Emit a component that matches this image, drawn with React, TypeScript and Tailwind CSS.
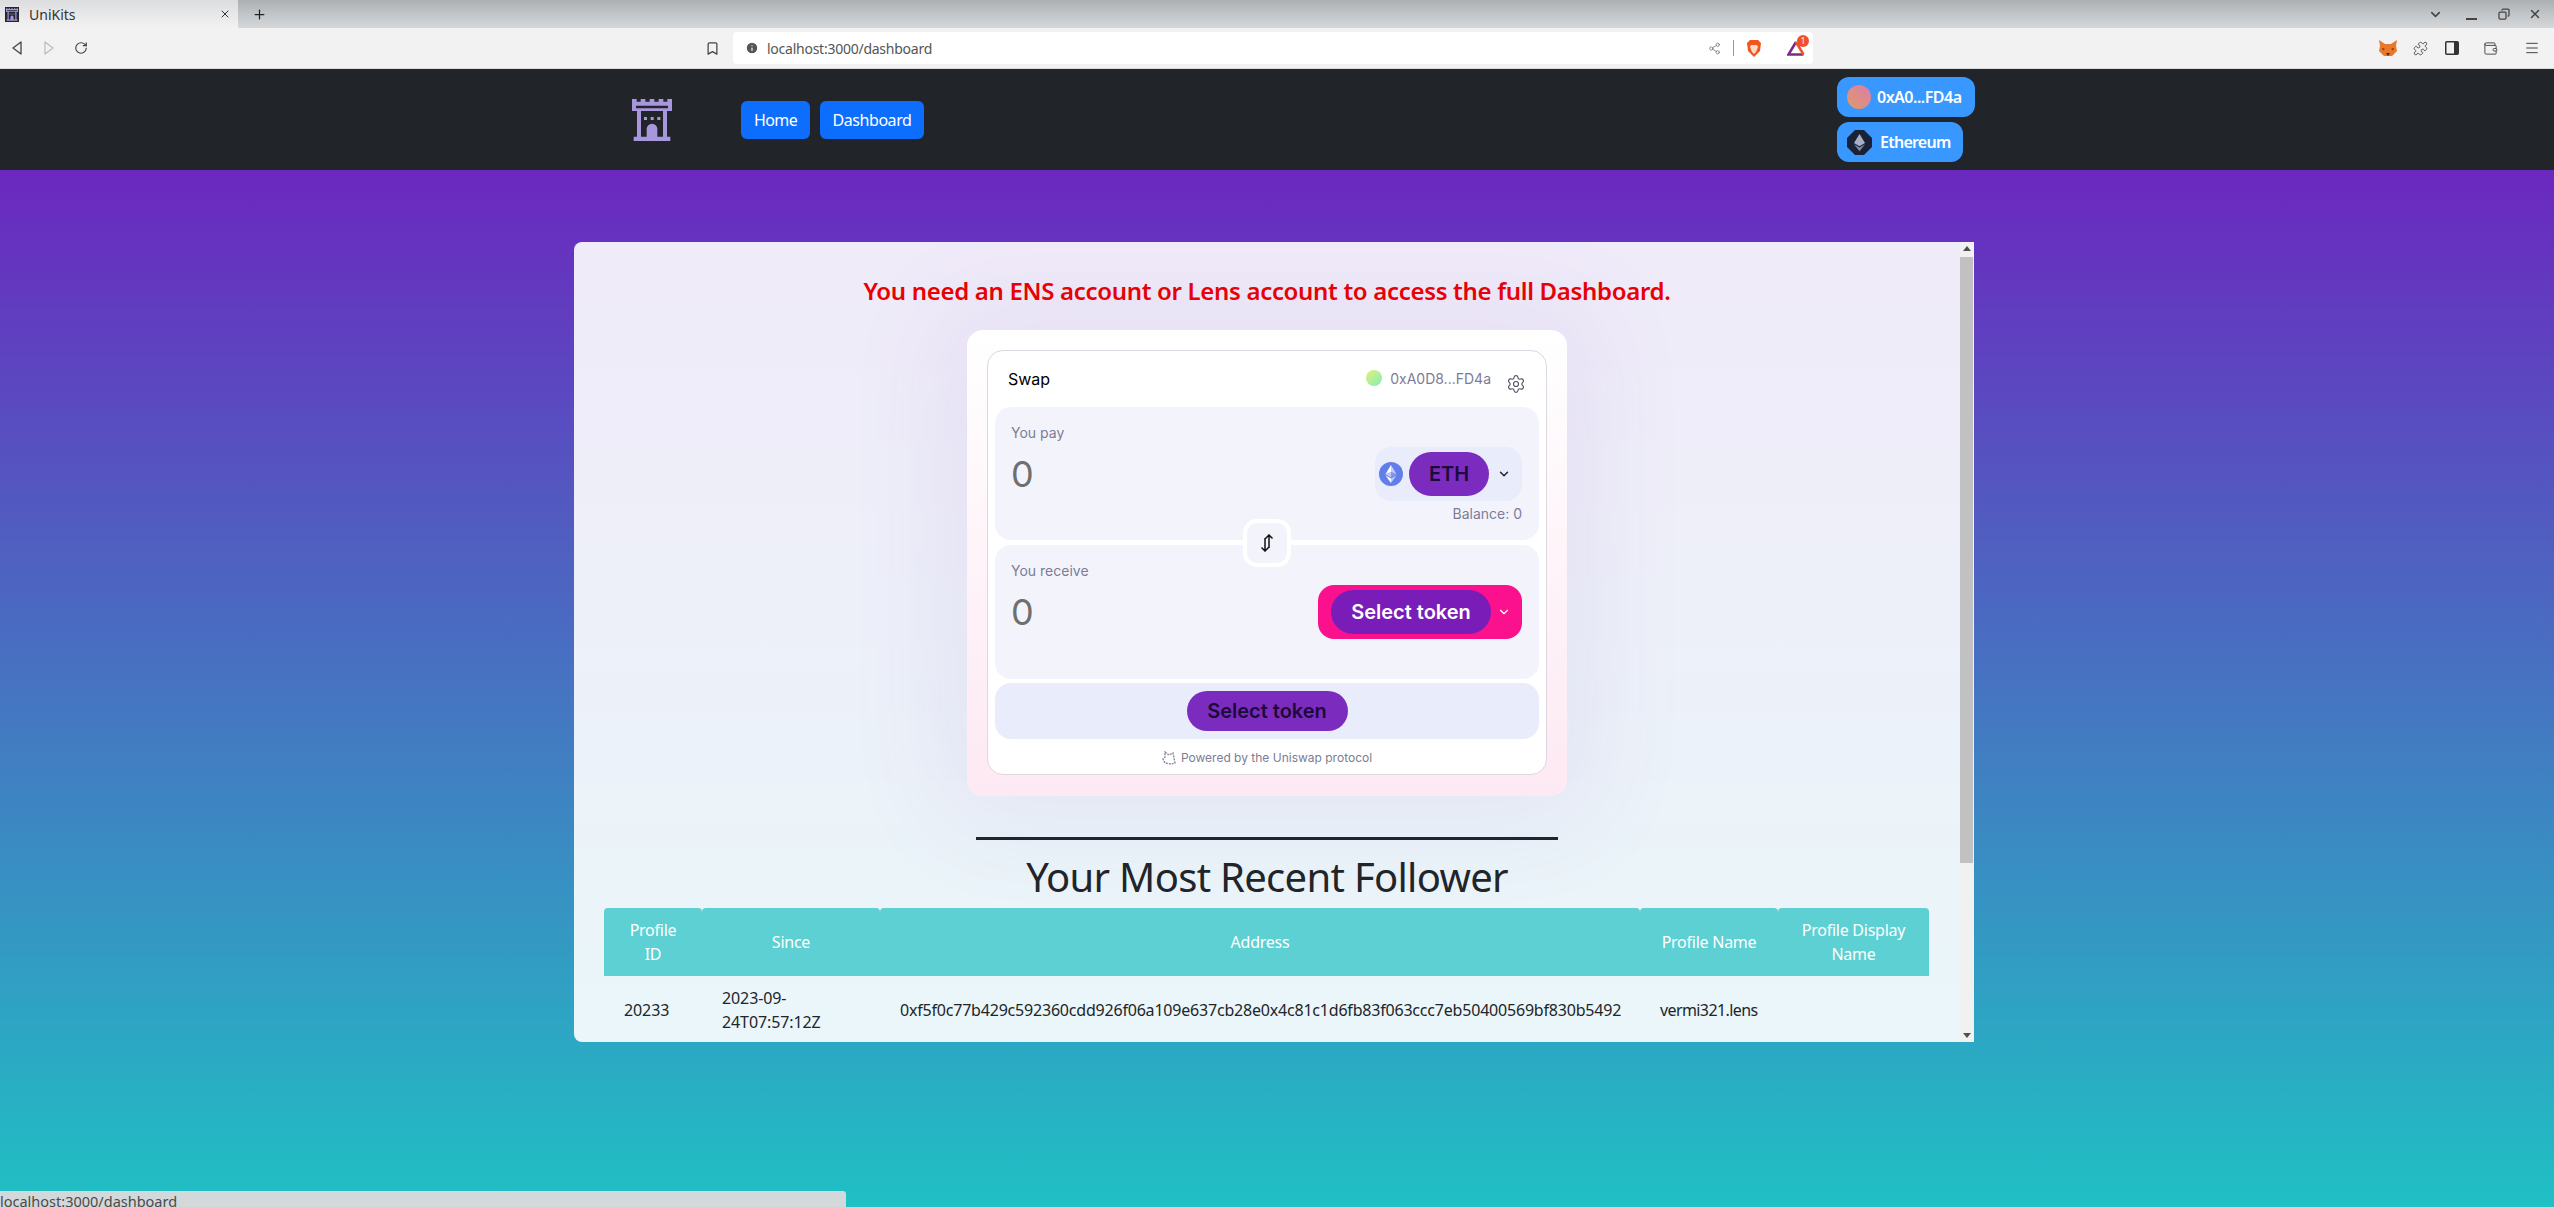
import React from "react";
import { ChevronDown, Settings, Share2, Bookmark, RotateCw, Puzzle, Wallet, Menu, Copy, X, Plus, Info } from "lucide-react";

const uiFont = "font-['Noto_Sans',sans-serif]";

const Castle = ({ className }: { className?: string }) => (
  <svg viewBox="0 0 120 126" className={className} fill="#a897dc">
    <path d="M0 0h14v8h12V0h14v8h13V0h14v8h13V0h14v8h12V0h14v36H105v77h10v13H5v-13h10V36H0z M12 20v8h96v-8z M27 36v77h17V90a16 16 0 0 1 32 0v23h17V36z" fillRule="evenodd" />
    <path d="M36 54h9v9h-9z M56 54h9v9h-9z M76 54h9v9h-9z" />
    <path d="M53 113V92a7 7 0 0 1 14 0v21z" />
  </svg>
);

const EthLogo = () => (
  <svg viewBox="0 0 24 24" className="w-6 h-6 shrink-0">
    <circle cx="12" cy="12" r="12" fill="#627eea" />
    <path d="M12 3v6.7l5.6 2.5z" fill="#fff" fillOpacity="0.6" />
    <path d="M12 3 6.4 12.2 12 9.7z" fill="#fff" />
    <path d="M12 16.5v4.5l5.6-7.8z" fill="#fff" fillOpacity="0.6" />
    <path d="M12 16.5v4.5l-5.6-7.8z" fill="#fff" />
    <path d="m12 15.5 5.6-3.3L12 9.7z" fill="#fff" fillOpacity="0.2" />
    <path d="m6.4 12.2 5.6 3.3V9.7z" fill="#fff" fillOpacity="0.6" />
  </svg>
);

export default function App() {
  return (
    <div className={`relative w-[2554px] h-[1207px] overflow-hidden flex flex-col ${uiFont}`}>
      {/* Browser tabs */}
      <div className="h-[28px] shrink-0 flex items-stretch bg-linear-to-b/srgb from-[#adb0b3] to-[#d6d9db]">
        <div className="w-[238px] flex items-center pl-[5px] pr-[7px] gap-[10px] bg-linear-to-b/srgb from-[#dcdddf] to-[#f2f2f2] text-[14px] text-[#333]">
          <Castle className="w-[14px] h-[15px] bg-[#23262c] p-[1px]" />
          <span className="flex-1">UniKits</span>
          <X size={12} />
        </div>
        <div className="flex items-center pl-[14px] text-[#222]">
          <Plus size={15} />
        </div>
        <div className="flex-1" />
        <div className="flex items-center pr-[3px] text-[#444]">
          <div className="w-[36px] flex justify-center"><ChevronDown size={15} strokeWidth={2.5} /></div>
          <div className="w-[36px] flex justify-center pt-[10px]"><div className="w-[11px] h-[2px] bg-[#444]" /></div>
          <div className="w-[30px] flex justify-center"><Copy size={12} strokeWidth={2.5} className="-scale-x-100" /></div>
          <div className="w-[32px] flex justify-center"><X size={14} strokeWidth={2.5} /></div>
        </div>
      </div>

      {/* Browser toolbar */}
      <div className="h-[40px] shrink-0 flex items-center bg-[#f2f2f2] text-[#444]">
        <div className="w-[700px] flex items-center gap-[18px] pl-[10px]">
          <svg viewBox="0 0 14 16" className="w-[14px] h-[16px]" fill="none" stroke="#444" strokeWidth="1.3" strokeLinejoin="round">
            <path d="M11 2v12L3 8z" />
          </svg>
          <svg viewBox="0 0 14 16" className="w-[14px] h-[16px]" fill="none" stroke="#bdbdbd" strokeWidth="1.3" strokeLinejoin="round">
            <path d="M3 2v12l8-6z" />
          </svg>
          <RotateCw size={14} />
        </div>
        <div className="w-[33px] pl-[5px]">
          <Bookmark size={15} />
        </div>
        <div className="w-[1080px] h-[32px] flex items-center bg-white rounded-[4px] pl-[12px] pr-[8px] gap-[8px]">
          <Info size={14} fill="#555" stroke="#fff" />
          <span className="flex-1 text-[14px] tracking-[-0.25px] text-[#555]">localhost:3000/dashboard</span>
          <Share2 size={13} strokeWidth={1.5} className="text-[#777]" />
          <div className="w-px h-[16px] bg-[#999] ml-[4px] mr-[5px]" />
          <svg viewBox="0 0 14 17" className="w-[14px] h-[17px]">
            <path d="M3 0h8l3 3-1 8-6 6-6-6-1-8z" fill="#f0561d" />
            <path d="M4 5h6l1 2-2 5-2 2-2-2-2-5z" fill="#fbd9c8" />
          </svg>
          <div className="relative ml-[18px] w-[18px] h-[16px]">
            <svg viewBox="0 0 18 16" className="w-[18px] h-[16px]" fill="none" strokeWidth="2.5">
              <path d="M9 2 1.5 14.5H16.5" stroke="#7d2a86" />
              <path d="M9 2 16.5 14.5" stroke="#f0502a" />
            </svg>
            <span className="absolute -top-[5px] -right-[4px] w-[12px] h-[12px] rounded-full bg-[#f0502a] text-white text-[8px] leading-[12px] text-center">1</span>
          </div>
        </div>
        <div className="flex-1 flex items-center justify-end">
          <div className="w-[36px] flex justify-center">
            <svg viewBox="0 0 18 18" className="w-[18px] h-[18px]">
              <path d="M0 1l6 4h6l6-4-1 6 1 5-5 5H5l-5-5 1-5z" fill="#e8792a" />
              <path d="M3 9l3 1-2 1z M15 9l-3 1 2 1z M7 14h4l-2 3z" fill="#4a2a12" />
            </svg>
          </div>
          <div className="w-[28px] flex justify-center"><Puzzle size={15} strokeWidth={1.5} /></div>
          <div className="w-[36px] flex justify-center">
            <svg viewBox="0 0 14 14" className="w-[14px] h-[14px]">
              <rect x="0.75" y="0.75" width="12.5" height="12.5" rx="1" fill="none" stroke="#333" strokeWidth="1.5" />
              <rect x="9" y="1" width="4" height="12" fill="#333" />
            </svg>
          </div>
          <div className="w-[40px] flex justify-center"><Wallet size={15} strokeWidth={1.5} /></div>
          <div className="w-[44px] flex justify-center"><Menu size={16} strokeWidth={1.5} /></div>
        </div>
      </div>

      {/* Navbar */}
      <nav className="h-[102px] flex bg-[#212529] border-t border-[#d8dadc] pl-[632px] shrink-0">
        <div className="w-[109px] flex items-center">
          <Castle className="w-[40px] h-[42px]" />
        </div>
        <div className="w-[1096px] flex items-center gap-[10px]">
          <a className="h-[38px] w-[69px] flex items-center justify-center rounded-[6px] bg-[#0d6efd] text-white text-[16px] tracking-[-0.6px]">Home</a>
          <a className="h-[38px] w-[104px] flex items-center justify-center rounded-[6px] bg-[#0d6efd] text-white text-[16px] tracking-[-0.45px]">Dashboard</a>
        </div>
        <div className="flex flex-col items-start gap-[5px] pt-[8px]">
          <button className="h-[40px] w-[138px] flex items-center gap-[6px] pl-[10px] rounded-[12px] bg-[#3898ff] text-white text-[16px] font-semibold tracking-[-0.5px]">
            <span className="w-[24px] h-[24px] rounded-full bg-linear-to-tr/srgb from-[#e09a6a] to-[#d87ea8]" />
            0xA0...FD4a
          </button>
          <button className="h-[40px] w-[126px] flex items-center gap-[8px] pl-[10px] rounded-[12px] bg-[#3898ff] text-white text-[16px] font-semibold tracking-[-0.75px]">
            <svg viewBox="0 0 25 25" className="w-[25px] h-[25px] shrink-0">
              <path d="M8 0h9l8 8v9l-8 8H8l-8-8V8z" fill="#1b2236" strokeLinejoin="round" />
              <path d="M12.5 4 7 13l5.5 3.2L18 13z" fill="#a6aec8" />
              <path d="M12.5 17.5 7 14.3l5.5 7 5.5-7z" fill="#8089a8" />
            </svg>
            Ethereum
          </button>
        </div>
      </nav>

      {/* Page */}
      <main className="flex-1 pt-[72px] pl-[574px] bg-linear-to-b/srgb from-[#6b28bf] to-[#20c0c4]">
        <div className="relative w-[1400px] h-[800px] flex rounded-l-[8px] overflow-hidden bg-white/90">
          <div className="w-[1386px] flex flex-col items-center">
            <h3 className="mt-[32px] w-full text-center text-[24px] leading-[34px] font-semibold tracking-[-0.32px] text-[#ea0000]">
              You need an ENS account or Lens account to access the full Dashboard.
            </h3>

            {/* Swap widget */}
            <div className="mt-[22px] w-[600px] h-[466px] shrink-0 p-[20px] rounded-[16px] bg-linear-to-b/srgb from-[#ffffff] to-[#fde9f3] shadow-[0_0_100px_30px_rgba(130,70,190,0.07)]">
              <div className="w-[560px] h-[425px] rounded-[16px] bg-white border border-[#ddd7e2] px-[7px] flex flex-col">
                <div className="h-[56px] flex items-start shrink-0 font-['Inter',sans-serif]">
                  <span className="ml-[13px] mt-[16px] text-[16px] text-black">Swap</span>
                  <div className="flex-1" />
                  <span className="mt-[19px] w-[16px] h-[16px] rounded-full bg-linear-to-br/srgb from-[#e7ef7d] to-[#7cf0b4]" />
                  <span className="mt-[17px] ml-[8px] text-[14px] text-[#7c7c96]">0xA0D8...FD4a</span>
                  <Settings size={20} strokeWidth={1.4} className="mt-[23px] ml-[15px] mr-[13px] text-[#555566]" />
                </div>

                <div className="h-[133px] shrink-0 rounded-[16px] bg-[#f3f4fb] pl-[16px] pr-[17px] pt-[17px] font-['Inter',sans-serif]">
                  <div className="text-[14px] leading-[18px] text-[#7c7c96]">You pay</div>
                  <div className="mt-[5px] h-[54px] flex items-center justify-between">
                    <span className="text-[36px] text-[#6f6f6f]">0</span>
                    <div className="h-[54px] w-[147px] flex items-center pl-[4px] gap-[6px] rounded-[16px] bg-[#e8ecfb]">
                      <EthLogo />
                      <span className="w-[80px] h-[44px] flex items-center justify-center rounded-full bg-[#7b2cbf] text-[#1c0a3a] text-[20px] font-semibold">ETH</span>
                      <ChevronDown size={14} strokeWidth={2.5} className="ml-[2px] text-[#222]" />
                    </div>
                  </div>
                  <div className="mt-[3px] text-right text-[14px] leading-[20px] text-[#7c7c96]">Balance: 0</div>
                </div>

                <div className="relative h-[5px] shrink-0 z-10 flex justify-center">
                  <div className="absolute -top-[21px] w-[48px] h-[48px] flex items-center justify-center rounded-[14px] bg-[#f3f4fb] border-[4px] border-white">
                    <svg viewBox="0 0 16 18" className="w-[16px] h-[18px]" fill="none" stroke="#111" strokeWidth="1.5">
                      <path d="M10 14V1M6.5 4.5 10 1l3.5 3.5M6 4v13M2.5 13.5 6 17l3.5-3.5" />
                    </svg>
                  </div>
                </div>
                <div className="h-[134px] shrink-0 rounded-[16px] bg-[#f3f4fb] pl-[16px] pr-[17px] pt-[17px] font-['Inter',sans-serif]">
                  <div className="text-[14px] leading-[18px] text-[#7c7c96]">You receive</div>
                  <div className="mt-[5px] h-[54px] flex items-center justify-between">
                    <span className="text-[36px] text-[#6f6f6f]">0</span>
                    <div className="h-[54px] w-[204px] flex items-center pl-[13px] rounded-[16px] bg-[#fb118e]">
                      <span className="w-[160px] h-[44px] flex items-center justify-center rounded-full bg-[#7a1cb8] text-white text-[20px] font-semibold">Select token</span>
                      <ChevronDown size={14} strokeWidth={2} className="ml-[6px] text-white" />
                    </div>
                  </div>
                </div>

                <div className="mt-[4px] h-[56px] shrink-0 flex items-center justify-center rounded-[16px] bg-[#e8ecfb] font-['Inter',sans-serif]">
                  <span className="w-[161px] h-[40px] flex items-center justify-center rounded-full bg-[#7b2cbf] text-[#1c0a3a] text-[20px] font-semibold">Select token</span>
                </div>

                <div className="flex-1 pt-[2px] flex items-center justify-center gap-[5px] text-[12px] text-[#7c7c96] font-['Inter',sans-serif]">
                  <svg viewBox="0 0 14 14" className="w-[14px] h-[14px]" fill="none" stroke="#8a8a9a" strokeWidth="1.4" strokeDasharray="2 1">
                    <path d="M3 1l4 3 4-2 1 5 1 5-4 1-6-1-2-4 2-2z" />
                  </svg>
                  Powered by the Uniswap protocol
                </div>
              </div>
            </div>

            <hr className="mt-[41px] w-[582px] border-0 h-[3px] bg-[#212529] shrink-0" />
            <h2 className="mt-[13px] text-[40px] leading-[48px] tracking-[-0.7px] text-[#212529] shrink-0">Your Most Recent Follower</h2>

            {/* Follower table */}
            <table className="mt-[7px] -ml-[1px] w-[1325px] table-fixed border-separate border-spacing-0 text-[16px] leading-[24px] shrink-0">
              <colgroup>
                <col className="w-[98px]" />
                <col className="w-[178px]" />
                <col className="w-[760px]" />
                <col className="w-[138px]" />
                <col className="w-[151px]" />
              </colgroup>
              <thead>
                <tr className="text-white font-normal">
                  {["Profile ID", "Since", "Address", "Profile Name", "Profile Display Name"].map((h) => (
                    <th key={h} className="px-[20px] py-[10px] font-normal tracking-[-0.25px] text-center bg-[#5dd0d3] rounded-t-[4px]">{h}</th>
                  ))}
                </tr>
              </thead>
              <tbody className="text-[#212529]">
                <tr>
                  <td className="px-[20px] py-[10px] tracking-[-0.1px]">20233</td>
                  <td className="px-[20px] py-[10px] tracking-[-0.1px]">2023-09-24T07:57:12Z</td>
                  <td className="px-[20px] py-[10px] tracking-[-0.2px]">0xf5f0c77b429c592360cdd926f06a109e637cb28e0x4c81c1d6fb83f063ccc7eb50400569bf830b5492</td>
                  <td className="px-[20px] py-[10px] tracking-[-0.6px]">vermi321.lens</td>
                  <td className="px-[20px] py-[10px]" />
                </tr>
              </tbody>
            </table>
          </div>

          {/* Scrollbar */}
          <div className="relative w-[14px] bg-[#f1f1f1]">
            <div className="absolute top-[15px] left-0 w-[13px] h-[606px] bg-[#c1c1c1]" />
            <div className="absolute top-[4px] left-[3px] w-0 h-0 border-x-[4px] border-x-transparent border-b-[5px] border-b-[#505050]" />
            <div className="absolute bottom-[4px] left-[3px] w-0 h-0 border-x-[4px] border-x-transparent border-t-[5px] border-t-[#505050]" />
          </div>
        </div>
      </main>

      {/* Link status bubble */}
      <div className="absolute left-0 bottom-0 w-[846px] h-[16px] overflow-hidden rounded-tr-[3px] bg-[#d3d8da] text-[14.5px] leading-[20px] text-[#4a4a4a]">
        localhost:3000/dashboard
      </div>
    </div>
  );
}
